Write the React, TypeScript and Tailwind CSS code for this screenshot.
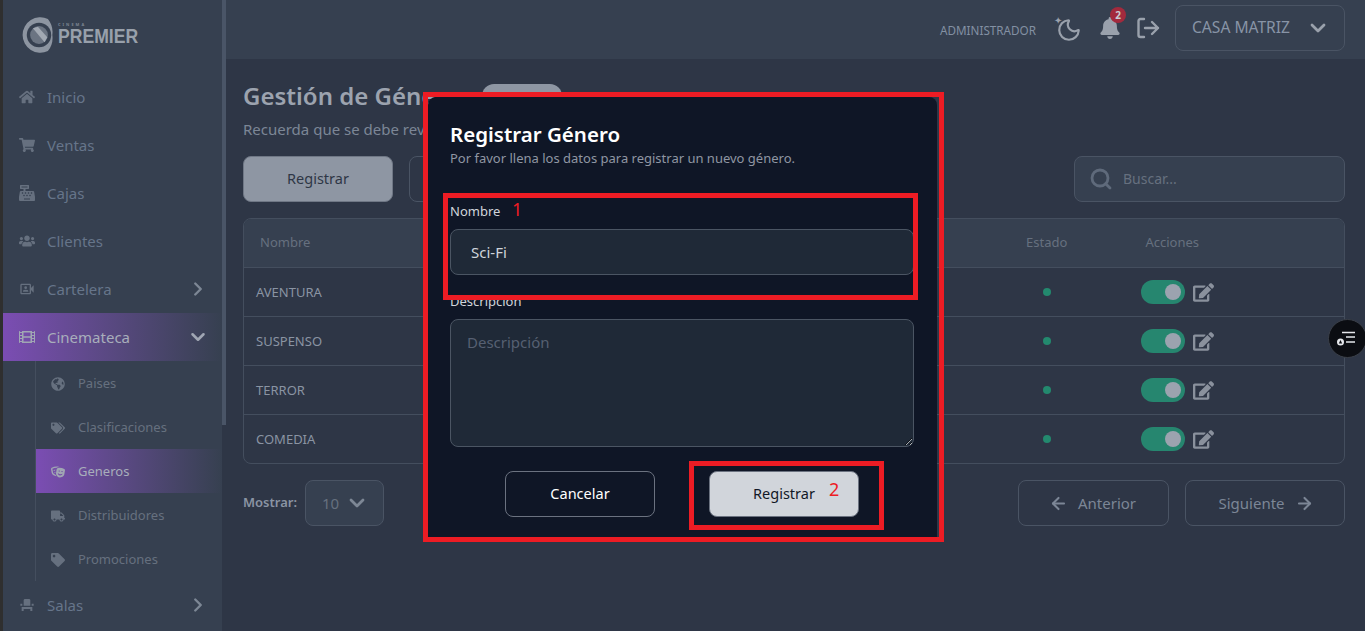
import {
  FaBell,
  FaCashRegister,
  FaEdit,
  FaFilm,
  FaGlobeAmericas,
  FaHome,
  FaShoppingCart,
  FaTag,
  FaTags,
  FaTheaterMasks,
  FaTruck,
  FaUsers,
} from "react-icons/fa";
import { MdEventSeat, MdOutlineVideoCameraFront } from "react-icons/md";
import { ArrowLeft, ArrowRight, ChevronDown, ChevronRight, Moon, Search } from "lucide-react";
import type { ReactNode } from "react";

const font = { fontFamily: '"Noto Sans", sans-serif' };

function Logo() {
  return (
    <div className="flex items-center h-[59px] pl-4 pt-[11px]">
      <svg width="40" height="40" viewBox="0 0 36 36" className="shrink-0">
        <path d="M26 3.5 A16 16 0 1 0 26 32.5 A19 19 0 0 0 30 18 A19 19 0 0 0 26 3.5 Z" fill="#8d95a1" />
        <circle cx="18" cy="18" r="11" fill="#364050" />
        <circle cx="18" cy="18" r="8" fill="#6b7482" />
        <path d="M12.5 12 L17 10.5 L25.5 20 L23 24.5 Z" fill="#a2a9b3" />
      </svg>
      <div className="flex flex-col items-start w-[82px] -ml-px -mt-[4px]">
        <span className="text-[4px] leading-[5px] tracking-[2px] text-[#7c8592] font-bold mb-[1px]">CINEMA</span>
        <span className="text-[20px] leading-[17px] font-bold text-[#98a0ab] scale-x-[0.88] origin-left whitespace-nowrap [font-family:'Liberation_Sans',sans-serif]">
          PREMIER
        </span>
      </div>
    </div>
  );
}

function NavItem({ icon, label, chevron, active }: { icon: ReactNode; label: string; chevron?: "right" | "down"; active?: boolean }) {
  return (
    <div
      className={`flex items-center h-12 pl-4 pr-4 ${
        active ? "bg-gradient-to-r from-[#7b4db3] to-[#364050] text-[#a8aebb]" : "text-[#66758a]"
      }`}
    >
      <span className={`w-7 flex justify-start text-base ${active ? "text-[#a0a6b3]" : "text-[#66707f]"}`}>{icon}</span>
      <span className="text-[15px] flex-1">{label}</span>
      {chevron === "right" && <ChevronRight size={22} strokeWidth={2.6} className="text-[#7d8795] -mr-[3px]" />}
      {chevron === "down" && <ChevronDown size={22} strokeWidth={2.8} className="text-[#a0a6b3] -mr-[3px]" />}
    </div>
  );
}

function SubItem({ icon, label, active }: { icon: ReactNode; label: string; active?: boolean }) {
  return (
    <div
      className={`flex items-center h-11 pl-[15px] pt-[2px] ${
        active ? "bg-gradient-to-r from-[#7b4db3] to-[#364050] text-[#a8aebb]" : "text-[#66707f]"
      }`}
    >
      <span className={`w-[27px] text-sm ${active ? "text-[#a0a6b3]" : "text-[#66707f]"}`}>{icon}</span>
      <span className="text-[13px]">{label}</span>
    </div>
  );
}

function Sidebar() {
  return (
    <aside className="w-[219px] shrink-0 bg-[#364050] h-full overflow-hidden">
      <Logo />
      <nav className="mt-[14px]">
        <NavItem icon={<FaHome />} label="Inicio" />
        <NavItem icon={<FaShoppingCart />} label="Ventas" />
        <NavItem icon={<FaCashRegister />} label="Cajas" />
        <NavItem icon={<FaUsers />} label="Clientes" />
        <NavItem icon={<MdOutlineVideoCameraFront />} label="Cartelera" chevron="right" />
        <NavItem icon={<FaFilm />} label="Cinemateca" chevron="down" active />
        <div className="ml-[32px] border-l border-[#444e5e]">
          <SubItem icon={<FaGlobeAmericas />} label="Paises" />
          <SubItem icon={<FaTags />} label="Clasificaciones" />
          <SubItem icon={<FaTheaterMasks />} label="Generos" active />
          <SubItem icon={<FaTruck />} label="Distribuidores" />
          <SubItem icon={<FaTag />} label="Promociones" />
        </div>
        <NavItem icon={<MdEventSeat />} label="Salas" chevron="right" />
      </nav>
    </aside>
  );
}

function Header() {
  return (
    <header className="h-[59px] bg-[#364050] flex items-center justify-end pr-5 pb-[3px] shrink-0">
      <span className="text-[11.7px] text-[#8390a3] mt-[6px]">ADMINISTRADOR</span>
      <span className="relative ml-[20px] text-[#9aa1ac]">
        <Moon size={26} className="mt-[3px]" />
        <span className="absolute top-[1px] -left-[2px] text-[10px] leading-none">✦</span>
      </span>
      <span className="relative ml-[17px] text-[#9aa1ac]">
        <FaBell size={22} />
        <span className="absolute -top-[10px] left-[11px] w-4 h-4 rounded-full bg-[#a32a3d] text-[#c9ccd3] text-[10px] font-bold flex items-center justify-center">
          2
        </span>
      </span>
      <svg width="24" height="24" viewBox="0 0 24 24" fill="none" stroke="#9aa1ac" strokeWidth="2.4" strokeLinecap="round" strokeLinejoin="round" className="ml-[15px]">
        <path d="M8 3H4.5a2 2 0 0 0-2 2v14a2 2 0 0 0 2 2H8" />
        <path d="M9 12h13M16 6l6 6-6 6" />
      </svg>
      <div className="ml-[15px] w-[170px] h-[46px] rounded-lg border border-[#4a5464] flex items-center justify-between pl-4 pr-[14px] text-[#8894a6] text-[15.6px]">
        CASA MATRIZ
        <ChevronDown size={24} strokeWidth={2.8} className="text-[#9aa1ac]" />
      </div>
    </header>
  );
}

function Row({ name }: { name: string }) {
  return (
    <div className="flex items-center h-[49px] border-t border-[#444e5e]">
      <span className="pl-3 pt-[1px] flex-1 text-[13px] text-[#8a94a3]">{name}</span>
      <span className="w-2 h-2 rounded-full bg-[#23896e] mr-[90px]" />
      <span className="w-11 h-6 rounded-full bg-[#26866f] flex items-center justify-end pr-1">
        <span className="w-4 h-4 rounded-full bg-[#9ca3af]" />
      </span>
      <FaEdit size={21} className="ml-2 mr-[130px] text-[#8a919d]" />
    </div>
  );
}

function Main() {
  return (
    <main className="flex-1 min-w-0 bg-[#2e3646] flex flex-col">
      <Header />
      <div className="pl-[17px] pr-5 flex flex-col flex-1">
        <div className="flex items-center gap-[10px] mt-[19px] h-[36px]">
          <h1 className="text-[24px] font-semibold text-[#9ca3af]">Gestión de Géneros</h1>
          <span className="w-20 h-[24px] rounded-full bg-[#8e96a3]" />
        </div>
        <p className="text-[15px] leading-5 text-[#7c8696] mt-[5px]">Recuerda que se debe revisar la información antes de registrar.</p>
        <div className="flex items-center mt-[17px] h-[46px]">
          <button className="w-[150px] h-[46px] rounded-lg bg-[#8e96a3] border border-[#6f7785] text-[#2e3646] text-[14.5px]">Registrar</button>
          <button className="ml-4 w-[150px] h-[46px] rounded-lg border border-[#4a5464]" />
          <div className="ml-auto w-[271px] h-[46px] rounded-lg bg-[#364050] border border-[#4a5464] flex items-center pl-[14px] text-[#66707f] text-sm">
            <Search size={24} strokeWidth={2.8} className="mr-[10px] text-[#5f6a7b]" />
            Buscar...
          </div>
        </div>
        <section className="mt-4 rounded-lg border border-[#444e5e] overflow-hidden">
          <div className="flex items-center h-[48px] bg-[#364050] text-[13px] text-[#66707f]">
            <span className="pl-4 flex-1">Nombre</span>
            <span className="mr-[78px]">Estado</span>
            <span className="mr-[145px]">Acciones</span>
          </div>
          <Row name="AVENTURA" />
          <Row name="SUSPENSO" />
          <Row name="TERROR" />
          <Row name="COMEDIA" />
        </section>
        <div className="flex items-center mt-4 h-[46px]">
          <span className="text-[13px] font-semibold text-[#8a94a3]">Mostrar:</span>
          <div className="ml-[8px] w-[79px] h-[46px] rounded-lg bg-[#364050] border border-[#4a5464] flex items-center justify-between pl-4 pr-[14px] text-[#66707f] text-[15px]">
            10
            <ChevronDown size={24} strokeWidth={2.8} className="text-[#7d8795]" />
          </div>
          <button className="ml-auto w-[151px] h-[46px] rounded-lg border border-[#4a5464] flex items-center justify-center gap-[10px] pr-[2px] text-[15px] text-[#7c8696]">
            <ArrowLeft size={19} strokeWidth={2.6} />
            Anterior
          </button>
          <button className="ml-4 w-[160px] h-[46px] rounded-lg border border-[#4a5464] flex items-center justify-center gap-[10px] pl-[2px] text-[15px] text-[#7c8696]">
            Siguiente
            <ArrowRight size={19} strokeWidth={2.6} />
          </button>
        </div>
      </div>
    </main>
  );
}

function Modal() {
  return (
    <div className="absolute left-[428px] top-[97px] w-[509px] h-[442px] rounded-t-lg bg-[#0f1626] pl-[22px] pr-[23px] pt-[23px] text-[#d1d5db]">
      <h2 className="text-[20.5px] leading-7 font-semibold text-white">Registrar Género</h2>
      <p className="text-[13px] leading-5 text-[#8f96a3]">Por favor llena los datos para registrar un nuevo género.</p>
      <label className="block text-[13px] leading-5 mt-[33px]">Nombre</label>
      <div className="mt-[8px] h-[46px] rounded-lg bg-[#1f2937] border border-[#4b5563] flex items-center pl-5 text-[15px] text-[#d1d5db]">Sci-Fi</div>
      <label className="block text-[13px] leading-5 mt-[16px]">Descripción</label>
      <textarea
        readOnly
        placeholder="Descripción"
        className="block mt-[8px] w-full h-[128px] rounded-lg bg-[#1f2937] border border-[#4b5563] px-4 py-[12px] text-[15px] leading-5 placeholder:text-[#566072] outline-none"
      />
      <div className="flex justify-center gap-[54px] mt-6">
        <button className="w-[150px] h-[46px] rounded-lg border border-[#6b7280] text-white text-[14.5px]">Cancelar</button>
        <button className="w-[150px] h-[46px] rounded-lg bg-[#d1d5db] border border-[#6b7280] text-[#111827] text-[14.5px]">Registrar</button>
      </div>
    </div>
  );
}

function Annotations() {
  return (
    <>
      <div className="absolute left-[423px] top-[92px] w-[521px] h-[450px] border-[5px] border-[#ed1c24]" />
      <div className="absolute left-[443px] top-[193px] w-[475px] h-[107px] border-[5px] border-[#ed1c24]" />
      <div className="absolute left-[689px] top-[461px] w-[195px] h-[69px] border-[5px] border-[#ed1c24]" />
      <span className="absolute left-[512px] top-[197px] text-[18px] leading-6 text-[#ed1c24]">1</span>
      <span className="absolute left-[829px] top-[477px] text-[18px] leading-6 text-[#ed1c24]">2</span>
    </>
  );
}

function FloatButton() {
  return (
    <div className="absolute left-[1328px] top-[319px] w-[39px] h-[39px] rounded-full bg-[#0b0d12] border border-[#3a3f48] flex items-center justify-center">
      <svg width="20" height="16" viewBox="0 0 20 16" fill="none" stroke="#e5e7eb" strokeWidth="1.4" className="-ml-[1px]">
        <path d="M5 1.5h13M9 6h9M9 11h9" />
        <circle cx="3.5" cy="11" r="3.5" fill="#e5e7eb" stroke="none" />
        <path d="M3.5 9 L5.2 12.5 H1.8 Z" fill="#0b0d12" stroke="none" />
      </svg>
    </div>
  );
}

export default function App() {
  return (
    <div className="relative w-[1365px] h-[631px] overflow-hidden flex bg-[#2f2f2f] pl-[3px]" style={font}>
      <Sidebar />
      <div className="w-1 shrink-0 h-full bg-[#2e3646]">
        <div className="h-[425px] bg-[#4a5567]" />
      </div>
      <Main />
      <Modal />
      <Annotations />
      <FloatButton />
    </div>
  );
}
